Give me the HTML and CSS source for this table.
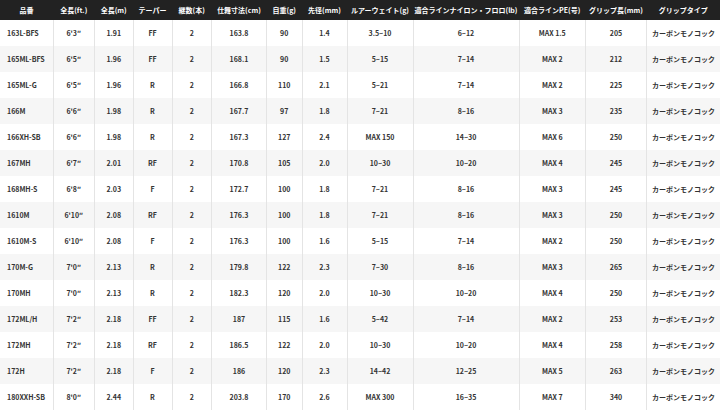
FILE: index.html
```html
<!DOCTYPE html>
<html lang="ja">
<head>
<meta charset="utf-8">
<link rel="stylesheet" href="styles.css">
</head>
<body>
<table class="spec">
<colgroup>
<col class="c1"><col class="c2"><col class="c3"><col class="c4"><col class="c5"><col class="c6"><col class="c7"><col class="c8"><col class="c9"><col class="c10"><col class="c11"><col class="c12"><col class="c13">
</colgroup>
<thead>
<tr><th>品番</th><th>全長(ft.)</th><th>全長(m)</th><th>テーパー</th><th>継数(本)</th><th>仕舞寸法(cm)</th><th>自重(g)</th><th>先径(mm)</th><th>ルアーウェイト(g)</th><th>適合ラインナイロン・フロロ(lb)</th><th>適合ラインPE(号)</th><th>グリップ長(mm)</th><th>グリップタイプ</th></tr>
</thead>
<tbody>
<tr><td>163L-BFS</td><td>6'3″</td><td>1.91</td><td>FF</td><td>2</td><td>163.8</td><td>90</td><td>1.4</td><td>3.5~10</td><td>6~12</td><td>MAX 1.5</td><td>205</td><td>カーボンモノコック</td></tr>
<tr><td>165ML-BFS</td><td>6'5″</td><td>1.96</td><td>FF</td><td>2</td><td>168.1</td><td>90</td><td>1.5</td><td>5~15</td><td>7~14</td><td>MAX 2</td><td>212</td><td>カーボンモノコック</td></tr>
<tr><td>165ML-G</td><td>6'5″</td><td>1.96</td><td>R</td><td>2</td><td>166.8</td><td>110</td><td>2.1</td><td>5~21</td><td>7~14</td><td>MAX 2</td><td>225</td><td>カーボンモノコック</td></tr>
<tr><td>166M</td><td>6'6″</td><td>1.98</td><td>R</td><td>2</td><td>167.7</td><td>97</td><td>1.8</td><td>7~21</td><td>8~16</td><td>MAX 3</td><td>235</td><td>カーボンモノコック</td></tr>
<tr><td>166XH-SB</td><td>6'6″</td><td>1.98</td><td>R</td><td>2</td><td>167.3</td><td>127</td><td>2.4</td><td>MAX 150</td><td>14~30</td><td>MAX 6</td><td>250</td><td>カーボンモノコック</td></tr>
<tr><td>167MH</td><td>6'7″</td><td>2.01</td><td>RF</td><td>2</td><td>170.8</td><td>105</td><td>2.0</td><td>10~30</td><td>10~20</td><td>MAX 4</td><td>245</td><td>カーボンモノコック</td></tr>
<tr><td>168MH-S</td><td>6'8″</td><td>2.03</td><td>F</td><td>2</td><td>172.7</td><td>100</td><td>1.8</td><td>7~21</td><td>8~16</td><td>MAX 3</td><td>245</td><td>カーボンモノコック</td></tr>
<tr><td>1610M</td><td>6'10″</td><td>2.08</td><td>RF</td><td>2</td><td>176.3</td><td>100</td><td>1.8</td><td>7~21</td><td>8~16</td><td>MAX 3</td><td>250</td><td>カーボンモノコック</td></tr>
<tr><td>1610M-S</td><td>6'10″</td><td>2.08</td><td>F</td><td>2</td><td>176.3</td><td>100</td><td>1.6</td><td>5~15</td><td>7~14</td><td>MAX 2</td><td>250</td><td>カーボンモノコック</td></tr>
<tr><td>170M-G</td><td>7'0″</td><td>2.13</td><td>R</td><td>2</td><td>179.8</td><td>122</td><td>2.3</td><td>7~30</td><td>8~16</td><td>MAX 3</td><td>265</td><td>カーボンモノコック</td></tr>
<tr><td>170MH</td><td>7'0″</td><td>2.13</td><td>R</td><td>2</td><td>182.3</td><td>120</td><td>2.0</td><td>10~30</td><td>10~20</td><td>MAX 4</td><td>250</td><td>カーボンモノコック</td></tr>
<tr><td>172ML/H</td><td>7'2″</td><td>2.18</td><td>FF</td><td>2</td><td>187</td><td>115</td><td>1.6</td><td>5~42</td><td>7~14</td><td>MAX 2</td><td>253</td><td>カーボンモノコック</td></tr>
<tr><td>172MH</td><td>7'2″</td><td>2.18</td><td>RF</td><td>2</td><td>186.5</td><td>122</td><td>2.0</td><td>10~30</td><td>10~20</td><td>MAX 4</td><td>258</td><td>カーボンモノコック</td></tr>
<tr><td>172H</td><td>7'2″</td><td>2.18</td><td>F</td><td>2</td><td>186</td><td>120</td><td>2.3</td><td>14~42</td><td>12~25</td><td>MAX 5</td><td>263</td><td>カーボンモノコック</td></tr>
<tr><td>180XXH-SB</td><td>8'0″</td><td>2.44</td><td>R</td><td>2</td><td>203.8</td><td>170</td><td>2.6</td><td>MAX 300</td><td>16~35</td><td>MAX 7</td><td>340</td><td>カーボンモノコック</td></tr>
</tbody>
</table>
</body>
</html>
```
FILE: styles.css
```css
html, body {
  margin: 0;
  padding: 0;
  background: #ffffff;
}
body {
  font-family: "Noto Sans CJK JP", "Noto Sans", sans-serif;
  font-size: 7px;
  font-weight: 700;
  color: #333333;
}
.spec {
  width: 720px;
  border-collapse: collapse;
  table-layout: fixed;
}
.c1 { width: 53px; }
.c2 { width: 41.5px; }
.c3 { width: 38.5px; }
.c4 { width: 39px; }
.c5 { width: 39.5px; }
.c6 { width: 55px; }
.c7 { width: 35.5px; }
.c8 { width: 45px; }
.c9 { width: 66px; }
.c10 { width: 106px; }
.c11 { width: 66.5px; }
.c12 { width: 61px; }
.c13 { width: 73.5px; }
.spec th {
  height: 20px;
  padding: 0;
  background: #222222;
  color: #ffffff;
  font-weight: 700;
  text-align: center;
  white-space: nowrap;
  overflow: hidden;
}
.spec td {
  height: 26px;
  padding: 0;
  text-align: center;
  white-space: nowrap;
  border-left: 1px solid #e4e4e4;
}
.spec td:first-child {
  border-left: none;
  text-align: left;
  padding-left: 7px;
}
.spec tbody tr:nth-child(even) td {
  background: #f6f6f6;
}
```
